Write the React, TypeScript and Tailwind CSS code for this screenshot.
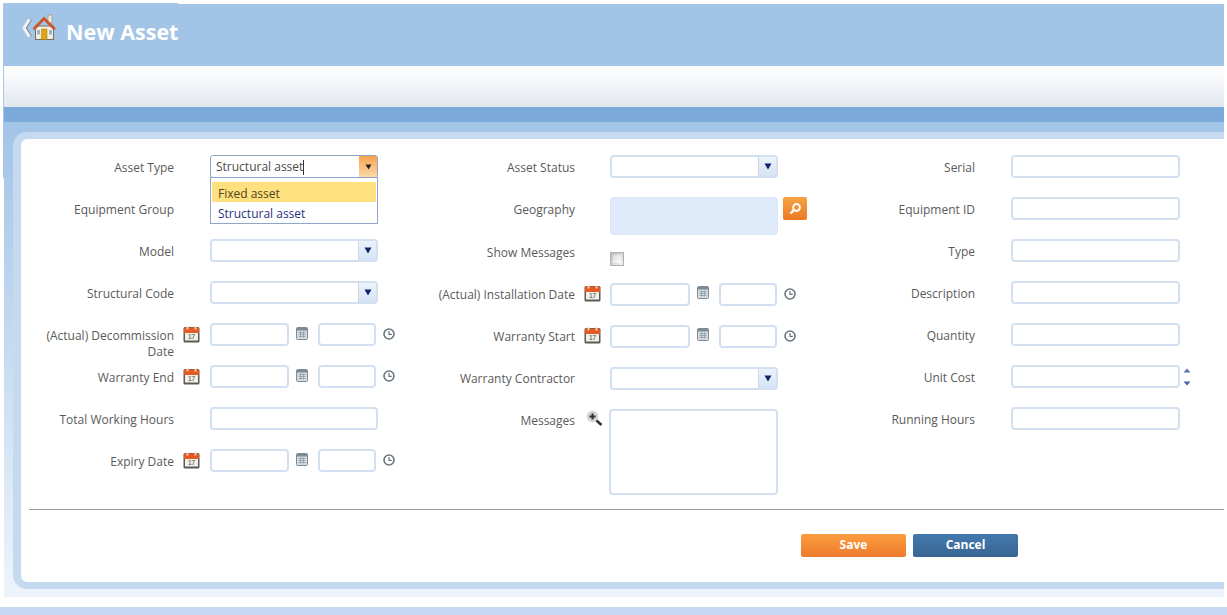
import React from "react";

const fieldBorder = "border-2 border-[#d3e0f2] rounded-[4px] bg-white";

function CalendarIcon() {
  return (
    <svg width="17" height="17" viewBox="0 0 17 17" className="block">
      <rect x="0.5" y="1" width="16" height="15.5" rx="1.5" fill="#5a5a5a" />
      <rect x="1" y="1.5" width="15" height="5.5" fill="#e35a22" />
      <rect x="2" y="7" width="13" height="7.5" fill="#f4efe4" />
      <rect x="3.5" y="0.5" width="2" height="3" fill="#f7c9a8" />
      <rect x="11.5" y="0.5" width="2" height="3" fill="#f7c9a8" />
      <text x="8.5" y="13" textAnchor="middle" fontSize="6.5" fontWeight="700" fill="#777" fontFamily="'Liberation Sans',sans-serif">17</text>
    </svg>
  );
}

function SmallCalendar() {
  return (
    <svg width="12" height="13" viewBox="0 0 12 13" className="block">
      <rect x="0.5" y="0.5" width="11" height="12" rx="1" fill="#d5dde3" stroke="#7b8a94" />
      <rect x="1" y="1" width="10" height="2.5" fill="#7b8a94" />
      <path d="M2.5 5.5h7M2.5 7.5h7M2.5 9.5h7M4.5 4.5v6M7.5 4.5v6" stroke="#8e9ba4" strokeWidth="0.8" />
    </svg>
  );
}

function ClockIcon() {
  return (
    <svg width="12" height="12" viewBox="0 0 12 12" className="block">
      <circle cx="6" cy="6" r="5" fill="#fff" stroke="#69767e" strokeWidth="1.6" />
      <path d="M6 3V6.3H8.8" fill="none" stroke="#69767e" strokeWidth="1.2" />
    </svg>
  );
}

function Arrow({ color, size = 8 }: { color: string; size?: number }) {
  return (
    <svg width={size} height={size - 1} viewBox="0 0 8 7" className="block">
      <path d="M0.5 0.5H7.5L4 6.5Z" fill={color} />
    </svg>
  );
}

function TextBox({ w = "w-[168px]" }: { w?: string }) {
  return <div className={`${w} h-[23px] ${fieldBorder}`} />;
}

function Select() {
  return (
    <div className={`w-[168px] h-[23px] flex justify-end ${fieldBorder}`}>
      <div className="w-[18px] flex items-center justify-center border-l border-[#c8d6ea] bg-gradient-to-b from-[#edf3fb] to-[#d6e3f4]">
        <Arrow color="#0c2272" />
      </div>
    </div>
  );
}

function DateTime({ w, tight }: { w: string; tight?: boolean }) {
  return (
    <div className="flex items-start">
      <div className={`${w} h-[23px] ${fieldBorder}`} />
      <div className={tight ? "ml-[7px] mr-[10px] pt-[3px]" : "ml-[7px] mr-[10px] pt-[4px]"}><SmallCalendar /></div>
      <div className={`w-[58px] h-[23px] ${fieldBorder}`} />
      <div className="ml-[7px] pt-[5px]"><ClockIcon /></div>
    </div>
  );
}

function Row({
  label, icon, children, labelW = "w-[154px]", slotW = "w-[35px]", labelPt = "pt-[5px]", slotPt = "pt-[3px]", h = "h-[42px]",
}: {
  label: React.ReactNode; icon?: React.ReactNode; children?: React.ReactNode;
  labelW?: string; slotW?: string; labelPt?: string; slotPt?: string; h?: string;
}) {
  return (
    <div className={`flex ${h} items-start`}>
      <div className={`${labelW} ${labelPt} shrink-0 text-right text-[12px] leading-[16px] text-[#5a5a5a]`}>{label}</div>
      <div className={`${slotW} ${slotPt} shrink-0 pl-[9px]`}>{icon}</div>
      <div className="relative">{children}</div>
    </div>
  );
}

function Col1Row(props: { label: React.ReactNode; icon?: React.ReactNode; children?: React.ReactNode }) {
  return <Row labelW="w-[153px]" slotW="w-[36px]" {...props} />;
}

function Col3Row(props: { label: React.ReactNode; children?: React.ReactNode }) {
  return <Row slotW="w-[36px]" {...props} />;
}

function Col2Low(props: { label: React.ReactNode; icon?: React.ReactNode; children?: React.ReactNode }) {
  return <Row labelPt="pt-[4px]" slotPt="pt-[2px]" {...props} />;
}

function AssetTypeCombo() {
  return (
    <div className="relative w-[168px] h-[23px]">
      <div className="flex h-[23px] w-[168px] rounded-[3px] border border-[#8fa6c9] bg-white">
        <div className="flex-1 pl-[5px] text-[12px] leading-[22px] text-[#4a4a4a]">
          Structural asset<span className="inline-block h-[15px] w-px bg-[#333] align-middle" />
        </div>
        <div className="flex w-[18px] items-center justify-center bg-gradient-to-b from-[#f6a24a] to-[#fbd9a6]">
          <Arrow color="#222" size={7} />
        </div>
      </div>
      <div className="absolute left-0 top-[22px] z-10 h-[47px] w-[168px] border border-[#8fa6c9] bg-white px-px pt-[4px] text-[12px] leading-[23px]">
        <div className="h-[20px] bg-[#ffe07e] pl-[6px] text-[#4d4520]">Fixed asset</div>
        <div className="h-[20px] pl-[6px] text-[#27327e]">Structural asset</div>
      </div>
    </div>
  );
}

export default function App() {
  return (
    <div className="relative h-[615px] w-[1227px] overflow-hidden bg-white pt-[4px] font-['Open_Sans','Noto_Sans',sans-serif]">
      <div className="absolute left-[3px] top-[3px] h-[175px] w-[175px] bg-[#a9c9e8]" />
      <div className="relative ml-[4px] w-[1220px]">
        <header className="flex h-[62px] items-start bg-[#a2c4e6] pl-[17px] pt-[10px]">
          <svg width="36" height="28" viewBox="0 0 36 28" className="block shrink-0">
            <path d="M9 5 L3.8 14 L9 23" fill="none" stroke="#7f8c99" strokeWidth="4" />
            <path d="M8.5 5 L3 14 L8.5 23" fill="none" stroke="#f2f4f6" strokeWidth="3" />
            <rect x="27" y="1" width="4" height="8" fill="#ece8de" stroke="#8a8170" strokeWidth="0.6" />
            <rect x="14.5" y="12" width="18" height="13.5" fill="#f3eee2" stroke="#77705f" strokeWidth="1" />
            <path d="M12 14 L23 2.5 L34.5 14 L34.5 15.5 L32 15.5 L23 6.5 L14.5 15.5 L12 15.5 Z" fill="#c9572a" />
            <rect x="20.5" y="15" width="5.5" height="10.5" fill="#e0a417" stroke="#a87c12" strokeWidth="0.5" />
            <rect x="16" y="16" width="3" height="4.5" fill="#9fb4c4" />
            <rect x="28" y="16" width="3" height="4.5" fill="#9fb4c4" />
          </svg>
          <h1 className="ml-[9px] pt-[3px] text-[21.5px] font-bold leading-[30px] text-white">New Asset</h1>
        </header>
        <div className="h-[41px] bg-gradient-to-b from-white to-[#e3e8ef]" />
        <div className="h-[15px] bg-[#7cabdb]" />
        <div className="h-[475px] bg-gradient-to-b from-[#a2c4e6] to-[#eef4fb] pl-[9px] pt-[10px]">
          <div className="relative h-[457px] rounded-l-[14px] border-y-[7px] border-l-[8px] border-[#c5daf1] bg-white">
            <div className="grid grid-cols-[400px_400px_1fr] pt-[16px]">
              <div className="flex flex-col">
                <Col1Row label="Asset Type"><AssetTypeCombo /></Col1Row>
                <Col1Row label="Equipment Group"><TextBox /></Col1Row>
                <Col1Row label="Model"><Select /></Col1Row>
                <Col1Row label="Structural Code"><Select /></Col1Row>
                <Col1Row label={<>(Actual) Decommission Date</>} icon={<CalendarIcon />}><DateTime w="w-[79px]" /></Col1Row>
                <Col1Row label="Warranty End" icon={<CalendarIcon />}><DateTime w="w-[79px]" /></Col1Row>
                <Col1Row label="Total Working Hours"><TextBox /></Col1Row>
                <Col1Row label="Expiry Date" icon={<CalendarIcon />}><DateTime w="w-[79px]" /></Col1Row>
              </div>
              <div className="flex flex-col">
                <Row label="Asset Status"><Select /></Row>
                <Row label="Geography">
                  <div className="flex items-start gap-[5px]">
                    <div className="h-[38px] w-[168px] rounded-[4px] border border-[#d8e5f6] bg-[#dfeafb]" />
                    <div className="flex h-[23px] w-[24px] items-center justify-center rounded-[2px] bg-gradient-to-b from-[#f8a243] to-[#ea7a23]">
                      <svg width="14" height="14" viewBox="0 0 14 14">
                        <circle cx="8.5" cy="5.5" r="3.4" fill="none" stroke="#fff" strokeWidth="2" />
                        <path d="M6 8 L2.5 11.5" stroke="#fff" strokeWidth="2.4" />
                      </svg>
                    </div>
                  </div>
                </Row>
                <Row label="Show Messages" labelPt="pt-[6px]" h="h-[44px]">
                  <div className="mt-[13px] h-[14px] w-[14px] border border-[#b2b2b2] bg-gradient-to-br from-[#bdbdbd] to-[#f2f2f2] p-[2px]">
                    <div className="h-full w-full bg-gradient-to-br from-[#dcdcdc] to-white" />
                  </div>
                </Row>
                <Col2Low label="(Actual) Installation Date" icon={<CalendarIcon />}><DateTime w="w-[80px]" tight /></Col2Low>
                <Col2Low label="Warranty Start" icon={<CalendarIcon />}><DateTime w="w-[80px]" tight /></Col2Low>
                <Col2Low label="Warranty Contractor"><Select /></Col2Low>
                <Col2Low label="Messages" icon={
                  <svg width="18" height="17" viewBox="0 0 18 17" className="block ml-[2px] -mt-[1px]">
                    <circle cx="6.5" cy="6.5" r="5.8" fill="#d4d4d4" />
                    <path d="M6.5 3.5v6M3.5 6.5h6" stroke="#333" strokeWidth="2" />
                    <path d="M10.5 10.5 L15.5 15" stroke="#333" strokeWidth="2.6" />
                  </svg>
                }>
                  <div className={`-ml-px h-[86px] w-[169px] ${fieldBorder}`} />
                </Col2Low>
              </div>
              <div className="flex flex-col">
                <Col3Row label="Serial"><TextBox w="w-[169px]" /></Col3Row>
                <Col3Row label="Equipment ID"><TextBox w="w-[169px]" /></Col3Row>
                <Col3Row label="Type"><TextBox w="w-[169px]" /></Col3Row>
                <Col3Row label="Description"><TextBox w="w-[169px]" /></Col3Row>
                <Col3Row label="Quantity"><TextBox w="w-[169px]" /></Col3Row>
                <Col3Row label="Unit Cost">
                  <div className="flex items-start">
                    <TextBox w="w-[169px]" />
                    <div className="ml-[3px] flex flex-col gap-[8px] pt-[3px]">
                      <svg width="8" height="5" viewBox="0 0 8 5" className="block"><path d="M0.5 4.5H7.5L4 0.5Z" fill="#5a6fae" /></svg>
                      <svg width="8" height="5" viewBox="0 0 8 5" className="block"><path d="M0.5 0.5H7.5L4 4.5Z" fill="#4a5fa6" /></svg>
                    </div>
                  </div>
                </Col3Row>
                <Col3Row label="Running Hours"><TextBox w="w-[169px]" /></Col3Row>
              </div>
            </div>
            <div className="absolute left-[8px] right-0 top-[370px] h-px bg-[#9a9a9a]" />
            <div className="absolute left-[780px] top-[395px] flex gap-[7px]">
              <button className="h-[23px] w-[105px] rounded-[2px] bg-gradient-to-b from-[#fb9d3e] to-[#ee7a2e] pb-[2px] text-[12px] font-bold text-white">Save</button>
              <button className="h-[23px] w-[105px] rounded-[2px] bg-gradient-to-b from-[#4479ad] to-[#386593] pb-[2px] text-[12px] font-bold text-white">Cancel</button>
            </div>
          </div>
        </div>
      </div>
      <div className="mt-[10px] h-[8px] bg-[#c5d9f3]" />
    </div>
  );
}
